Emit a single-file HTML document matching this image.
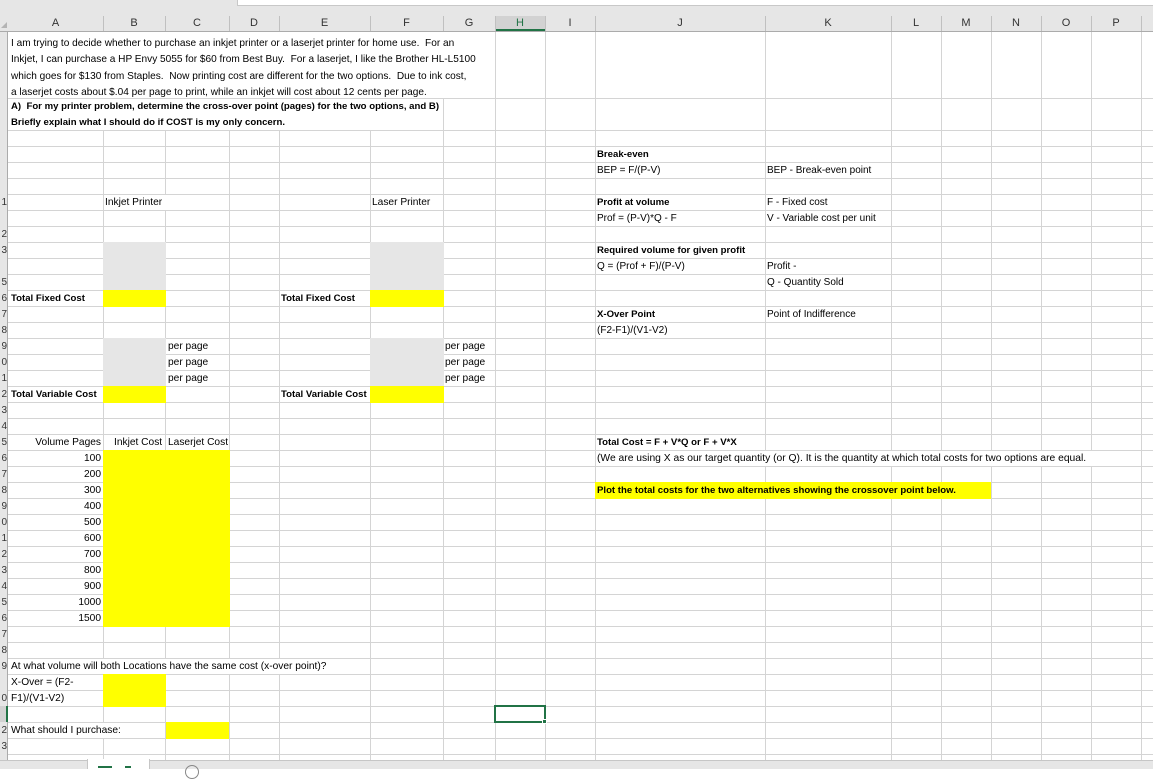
<!DOCTYPE html>
<html><head><meta charset="utf-8"><style>
body{margin:0;width:1153px;height:769px;overflow:hidden;background:#fff;position:relative;font-family:"Liberation Sans",sans-serif;}
div{position:absolute;box-sizing:border-box;}
.vl{width:1px;background:#d4d4d4;}
.hl{height:1px;background:#d4d4d4;}
.t{font-size:10.2px;line-height:16px;white-space:nowrap;color:#000;padding-top:1px;}
.b{font-weight:bold;font-size:9.6px !important;}
.y{background:#ffff00;}
.g{background:#e6e6e6;}
.w{background:#fff;}
.h{font-size:11px;color:#333;top:16px;height:15px;line-height:15px;text-align:center;}
.r{font-size:10px;line-height:16px;left:-4px;width:11px;text-align:right;color:#333;padding-top:1px;}
</style></head><body>
<div style="left:0;top:0;width:1153px;height:32px;background:#e6e6e6;"></div>
<div style="left:237px;top:0;width:916px;height:6px;background:#fff;border-left:1px solid #c8c8c8;border-bottom:1px solid #c8c8c8;"></div>
<div style="left:0;top:31px;width:1153px;height:1px;background:#ababab;"></div>
<div style="left:0;top:32px;width:8px;height:728px;background:#e6e6e6;border-right:1px solid #ababab;"></div>
<div style="left:495px;top:16px;width:50px;height:15px;background:#d2d2d2;border-bottom:2px solid #217346;"></div>
<div style="left:103px;top:16px;width:1px;height:15px;background:#c0c0c0"></div>
<div style="left:165px;top:16px;width:1px;height:15px;background:#c0c0c0"></div>
<div style="left:229px;top:16px;width:1px;height:15px;background:#c0c0c0"></div>
<div style="left:279px;top:16px;width:1px;height:15px;background:#c0c0c0"></div>
<div style="left:370px;top:16px;width:1px;height:15px;background:#c0c0c0"></div>
<div style="left:443px;top:16px;width:1px;height:15px;background:#c0c0c0"></div>
<div style="left:495px;top:16px;width:1px;height:15px;background:#c0c0c0"></div>
<div style="left:545px;top:16px;width:1px;height:15px;background:#c0c0c0"></div>
<div style="left:595px;top:16px;width:1px;height:15px;background:#c0c0c0"></div>
<div style="left:765px;top:16px;width:1px;height:15px;background:#c0c0c0"></div>
<div style="left:891px;top:16px;width:1px;height:15px;background:#c0c0c0"></div>
<div style="left:941px;top:16px;width:1px;height:15px;background:#c0c0c0"></div>
<div style="left:991px;top:16px;width:1px;height:15px;background:#c0c0c0"></div>
<div style="left:1041px;top:16px;width:1px;height:15px;background:#c0c0c0"></div>
<div style="left:1091px;top:16px;width:1px;height:15px;background:#c0c0c0"></div>
<div style="left:1141px;top:16px;width:1px;height:15px;background:#c0c0c0"></div>
<div class="h" style="left:8px;width:95px">A</div>
<div class="h" style="left:103px;width:62px">B</div>
<div class="h" style="left:165px;width:64px">C</div>
<div class="h" style="left:229px;width:50px">D</div>
<div class="h" style="left:279px;width:91px">E</div>
<div class="h" style="left:370px;width:73px">F</div>
<div class="h" style="left:443px;width:52px">G</div>
<div class="h" style="left:495px;width:50px;color:#217346">H</div>
<div class="h" style="left:545px;width:50px">I</div>
<div class="h" style="left:595px;width:170px">J</div>
<div class="h" style="left:765px;width:126px">K</div>
<div class="h" style="left:891px;width:50px">L</div>
<div class="h" style="left:941px;width:50px">M</div>
<div class="h" style="left:991px;width:50px">N</div>
<div class="h" style="left:1041px;width:50px">O</div>
<div class="h" style="left:1091px;width:50px">P</div>
<div style="left:1px;top:22px;width:0;height:0;border-left:6px solid transparent;border-bottom:6px solid #b4b4b4;"></div>

<div class="hl" style="left:8px;top:98px;width:1145px"></div>
<div style="left:8px;top:130px;width:1145px;height:630px;background:repeating-linear-gradient(to bottom,#d4d4d4 0,#d4d4d4 1px,transparent 1px,transparent 16px);"></div>
<div class="w" style="left:8px;top:691px;width:1145px;height:1px"></div>
<div class="vl" style="left:103px;top:130px;height:630px"></div>
<div class="vl" style="left:165px;top:130px;height:630px"></div>
<div class="vl" style="left:229px;top:130px;height:630px"></div>
<div class="vl" style="left:279px;top:130px;height:630px"></div>
<div class="vl" style="left:370px;top:130px;height:630px"></div>
<div class="vl" style="left:443px;top:98px;height:662px"></div>
<div class="vl" style="left:495px;top:32px;height:728px"></div>
<div class="vl" style="left:545px;top:32px;height:728px"></div>
<div class="vl" style="left:595px;top:32px;height:728px"></div>
<div class="vl" style="left:765px;top:32px;height:728px"></div>
<div class="vl" style="left:891px;top:32px;height:728px"></div>
<div class="vl" style="left:941px;top:32px;height:728px"></div>
<div class="vl" style="left:991px;top:32px;height:728px"></div>
<div class="vl" style="left:1041px;top:32px;height:728px"></div>
<div class="vl" style="left:1091px;top:32px;height:728px"></div>
<div class="vl" style="left:1141px;top:32px;height:728px"></div>

<div class="w" style="left:160px;top:195px;width:10px;height:15px"></div>
<div class="w" style="left:96px;top:659px;width:250px;height:15px"></div>
<div class="w" style="left:96px;top:723px;width:10px;height:15px"></div>
<div class="w" style="left:760px;top:451px;width:340px;height:15px"></div>

<div class="g" style="left:103px;top:242px;width:63px;height:48px"></div>
<div class="g" style="left:370px;top:242px;width:74px;height:48px"></div>
<div class="y" style="left:103px;top:290px;width:63px;height:17px"></div>
<div class="y" style="left:370px;top:290px;width:74px;height:17px"></div>
<div class="g" style="left:103px;top:338px;width:63px;height:48px"></div>
<div class="g" style="left:370px;top:338px;width:74px;height:48px"></div>
<div class="y" style="left:103px;top:386px;width:63px;height:17px"></div>
<div class="y" style="left:370px;top:386px;width:74px;height:17px"></div>
<div class="y" style="left:103px;top:450px;width:127px;height:177px"></div>
<div class="y" style="left:103px;top:674px;width:63px;height:33px"></div>
<div class="y" style="left:166px;top:722px;width:63px;height:17px"></div>
<div class="y" style="left:595px;top:482px;width:396px;height:17px"></div>

<div style="left:494px;top:705px;width:52px;height:18px;border:2px solid #217346;"></div>
<div style="left:542px;top:719px;width:5px;height:5px;background:#217346;border:1px solid #fff;"></div>
<div style="left:0;top:706px;width:8px;height:16px;background:#d2d2d2;border-right:2px solid #217346;"></div>

<div class="r" style="top:194px">1</div><div class="r" style="top:226px">2</div><div class="r" style="top:242px">3</div>
<div class="r" style="top:274px">5</div><div class="r" style="top:290px">6</div><div class="r" style="top:306px">7</div>
<div class="r" style="top:322px">8</div><div class="r" style="top:338px">9</div><div class="r" style="top:354px">0</div>
<div class="r" style="top:370px">1</div><div class="r" style="top:386px">2</div><div class="r" style="top:402px">3</div>
<div class="r" style="top:418px">4</div><div class="r" style="top:434px">5</div><div class="r" style="top:450px">6</div>
<div class="r" style="top:466px">7</div><div class="r" style="top:482px">8</div><div class="r" style="top:498px">9</div>
<div class="r" style="top:514px">0</div><div class="r" style="top:530px">1</div><div class="r" style="top:546px">2</div>
<div class="r" style="top:562px">3</div><div class="r" style="top:578px">4</div><div class="r" style="top:594px">5</div>
<div class="r" style="top:610px">6</div><div class="r" style="top:626px">7</div><div class="r" style="top:642px">8</div>
<div class="r" style="top:658px">9</div><div class="r" style="top:690px">0</div><div class="r" style="top:722px">2</div>
<div class="r" style="top:738px">3</div>

<div class="t" style="left:11px;top:35px;line-height:16.3px;font-size:10.1px">I am trying to decide whether to purchase an inkjet printer or a laserjet printer for home use.&nbsp; For an<br>Inkjet, I can purchase a HP Envy 5055 for $60 from Best Buy.&nbsp; For a laserjet, I like the Brother HL-L5100<br>which goes for $130 from Staples.&nbsp; Now printing cost are different for the two options.&nbsp; Due to ink cost,<br>a laserjet costs about $.04 per page to print, while an inkjet will cost about 12 cents per page.</div>
<div class="t b" style="left:11px;top:98px;">A)&nbsp; For my printer problem, determine the cross-over point (pages) for the two options, and B)<br>Briefly explain what I should do if COST is my only concern.</div>

<div class="t" style="left:105px;top:194px;">Inkjet Printer</div>
<div class="t" style="left:372px;top:194px;">Laser Printer</div>
<div class="t b" style="left:11px;top:290px;">Total Fixed Cost</div>
<div class="t b" style="left:281px;top:290px;">Total Fixed Cost</div>
<div class="t" style="left:168px;top:338px;">per page<br>per page<br>per page</div>
<div class="t" style="left:445px;top:338px;">per page<br>per page<br>per page</div>
<div class="t b" style="left:11px;top:386px;">Total Variable Cost</div>
<div class="t b" style="left:281px;top:386px;">Total Variable Cost</div>

<div class="t" style="left:8px;top:434px;width:93px;text-align:right;">Volume Pages</div>
<div class="t" style="left:114px;top:434px;">Inkjet Cost</div>
<div class="t" style="left:168px;top:434px;">Laserjet Cost</div>
<div class="t" style="left:8px;top:450px;width:93px;text-align:right;">100<br>200<br>300<br>400<br>500<br>600<br>700<br>800<br>900<br>1000<br>1500</div>

<div class="t" style="left:11px;top:658px;">At what volume will both Locations have the same cost (x-over point)?</div>
<div class="t" style="left:11px;top:674px;">X-Over = (F2-<br>F1)/(V1-V2)</div>
<div class="t" style="left:11px;top:722px;">What should I purchase:</div>

<div class="t b" style="left:597px;top:146px;">Break-even</div>
<div class="t" style="left:597px;top:162px;font-size:10px">BEP = F/(P-V)</div>
<div class="t" style="left:767px;top:162px;font-size:10px">BEP - Break-even point</div>
<div class="t b" style="left:597px;top:194px;">Profit at volume</div>
<div class="t" style="left:767px;top:194px;font-size:10px">F - Fixed cost</div>
<div class="t" style="left:597px;top:210px;font-size:10px">Prof = (P-V)*Q - F</div>
<div class="t" style="left:767px;top:210px;font-size:10px">V - Variable cost per unit</div>
<div class="t b" style="left:597px;top:242px;">Required volume for given profit</div>
<div class="t" style="left:597px;top:258px;font-size:10px">Q = (Prof + F)/(P-V)</div>
<div class="t" style="left:767px;top:258px;font-size:10px">Profit -</div>
<div class="t" style="left:767px;top:274px;font-size:10px">Q - Quantity Sold</div>
<div class="t b" style="left:597px;top:306px;">X-Over Point</div>
<div class="t" style="left:767px;top:306px;font-size:10px">Point of Indifference</div>
<div class="t" style="left:597px;top:322px;font-size:10px">(F2-F1)/(V1-V2)</div>
<div class="t b" style="left:597px;top:434px;">Total Cost = F + V*Q or F + V*X</div>
<div class="t" style="left:597px;top:450px;font-size:10.3px">(We are using X as our target quantity (or Q). It is the quantity at which total costs for two options are equal.</div>
<div class="t b" style="left:597px;top:482px;">Plot the total costs for the two alternatives showing the crossover point below.</div>

<div style="left:0;top:760px;width:1153px;height:9px;background:#e6e6e6;border-top:1px solid #c6c6c6;"></div>
<div style="left:87px;top:759px;width:63px;height:10px;background:#fff;border-left:1px solid #c6c6c6;border-right:1px solid #c6c6c6;"></div>
<div style="left:98px;top:766px;width:40px;height:3px;overflow:hidden;"><div style="left:0;top:0;width:14px;height:2px;background:#217346"></div><div style="left:27px;top:0;width:6px;height:2px;background:#217346"></div></div>
<div style="left:185px;top:765px;width:14px;height:14px;border:1px solid #888;border-radius:50%;"></div>
</body></html>
